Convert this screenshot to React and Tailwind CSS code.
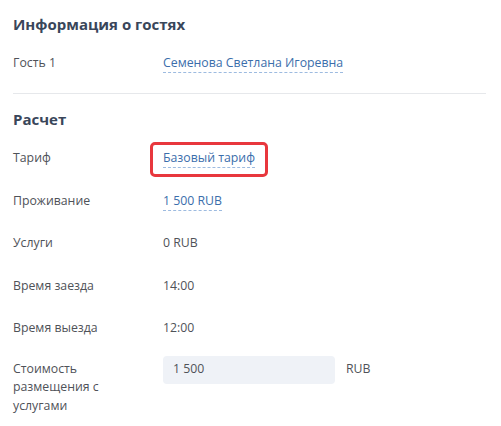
const font = { fontFamily: '"Open Sans", "Liberation Sans", sans-serif' };

function Row({ label, children, className = "" }) {
  return (
    <div className={`flex items-start h-[42.5px] ${className}`}>
      <div className="w-[150px] text-[12.3px] leading-[18px] text-[#4f5258]">{label}</div>
      <div className="text-[12.3px] leading-[18px] text-[#4f5258]">{children}</div>
    </div>
  );
}

function Link({ children }) {
  return (
    <span className="text-[#3b6eab] border-b border-dashed border-[#9dbbe0] pb-[1px]">{children}</span>
  );
}

export default function App() {
  return (
    <div className="w-[501px] h-[426px] bg-white overflow-hidden" style={font}>
      <div className="pl-[13px] pr-[15px] pt-[14px]">
        <h2 className="text-[15px] leading-[20px] font-bold text-[#39465a]">Информация о гостях</h2>
        <div className="flex mt-[20px]">
          <div className="w-[150px] text-[12.3px] leading-[18px] text-[#4f5258]">Гость 1</div>
          <div className="text-[12.3px] leading-[18px]">
            <Link>Семенова Светлана Игоревна</Link>
          </div>
        </div>
        <div className="mt-[21px] border-t border-[#e6e8eb] w-[473px]" />
        <h2 className="mt-[15px] text-[15px] leading-[20px] font-bold text-[#39465a]">Расчет</h2>
        <div className="mt-[20px] flex flex-col">
          <Row label="Тариф">
            <span className="relative">
              <Link>Базовый тариф</Link>
              <span className="absolute -left-[13px] -right-[13px] -top-[7px] -bottom-[11px] border-[3px] border-[#e8373d] rounded-[5px]" />
            </span>
          </Row>
          <Row label="Проживание">
            <Link>1 500 RUB</Link>
          </Row>
          <Row label="Услуги">0 RUB</Row>
          <Row label="Время заезда">14:00</Row>
          <Row label="Время выезда">12:00</Row>
          <div className="flex items-start -mt-[6px]">
            <div className="w-[150px] pt-[4px] text-[12.3px] leading-[18.5px] text-[#4f5258]">
              <div className="w-[110px]">Стоимость размещения с услугами</div>
            </div>
            <div className="w-[172px] h-[28px] rounded-[4px] bg-[#eff2f7] pl-[10px] flex items-center text-[12.3px] text-[#4f5258]">
              1 500
            </div>
            <div className="ml-[11px] h-[28px] flex items-center text-[12.3px] text-[#4f5258]">RUB</div>
          </div>
        </div>
      </div>
    </div>
  );
}
